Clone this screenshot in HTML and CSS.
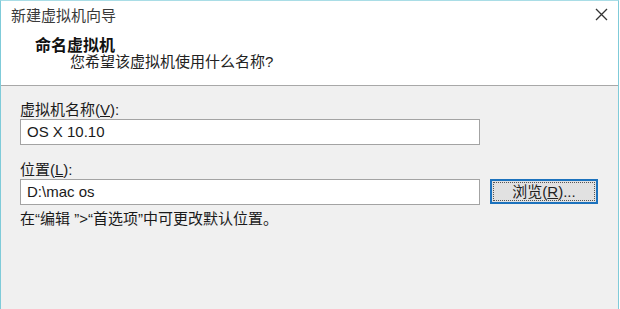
FILE: index.html
```html
<!DOCTYPE html>
<html lang="zh-CN">
<head>
<meta charset="utf-8">
<title>新建虚拟机向导</title>
<link rel="stylesheet" href="styles.css">
</head>
<body>
<div class="window">
  <div class="header">
    <div class="titlebar">
      <span class="title">新建虚拟机向导</span>
      <svg class="close" width="13" height="13" viewBox="0 0 13 13"><path d="M1 1 L12 12 M12 1 L1 12" stroke="#333" stroke-width="1.3" fill="none"/></svg>
    </div>
    <div class="heading">命名虚拟机</div>
    <div class="subtitle">您希望该虚拟机使用什么名称?</div>
  </div>
  <div class="content">
    <div class="label">虚拟机名称(<u>V</u>):</div>
    <div class="row">
      <div class="input">OS X 10.10</div>
    </div>
    <div class="label label2">位置(<u>L</u>):</div>
    <div class="row">
      <div class="input">D:\mac os</div>
      <div class="button"><span class="focus">浏览(<u>R</u>)...</span></div>
    </div>
    <div class="note">在“编辑 ”&gt;“首选项”中可更改默认位置。</div>
  </div>
</div>
</body>
</html>
```
FILE: styles.css
```css
html, body {
  margin: 0;
  padding: 0;
}
body {
  width: 620px;
  height: 309px;
  overflow: hidden;
  font-family: "Liberation Sans", "Noto Sans CJK SC", sans-serif;
  font-size: 15px;
  color: #1a1a1a;
}
.window {
  box-sizing: border-box;
  width: 619px;
  height: 309px;
  border-left: 1px solid #7fcbd9;
  border-right: 1px solid #7fcbd9;
  border-top: 1px solid #a9dde6;
  background: #f0f0f0;
  display: flex;
  flex-direction: column;
}
.header {
  background: #ffffff;
  height: 84px;
  border-bottom: 1px solid #a8a8a8;
  display: flex;
  flex-direction: column;
}
.titlebar {
  height: 27px;
  display: flex;
  align-items: center;
  justify-content: space-between;
  padding: 0 10px 0 10px;
}
.title {
  color: #3a3a3a;
  font-size: 15px;
  font-family: "Noto Sans CJK SC", sans-serif;
}
.close {
  display: block;
}
.heading {
  margin-top: 8px;
  padding-left: 34px;
  font-weight: bold;
  font-size: 16px;
  line-height: 17px;
  font-family: "Noto Sans CJK SC", sans-serif;
  color: #111;
}
.subtitle {
  padding-left: 69px;
  line-height: 17px;
  margin-top: 0;
  color: #222;
}
.content {
  padding: 15px 0 0 19px;
  display: flex;
  flex-direction: column;
}
.label {
  line-height: 18px;
}
.label2 {
  margin-top: 16px;
}
.row {
  display: flex;
  gap: 10px;
  align-items: flex-start;
}
.input {
  box-sizing: border-box;
  width: 460px;
  height: 26px;
  border: 1px solid #a3a3a3;
  background: #fff;
  padding-left: 6px;
  line-height: 24px;
}
.button {
  box-sizing: border-box;
  width: 108px;
  height: 25px;
  border: 2px solid #1c72bd;
  background: #e1e1e1;
  padding: 1px;
  display: flex;
}
.focus {
  flex: 1;
  border: 1px dotted #555;
  display: flex;
  align-items: center;
  justify-content: center;
  line-height: 17px;
  color: #222;
}
.note {
  margin-top: 5px;
  line-height: 18px;
}
```
